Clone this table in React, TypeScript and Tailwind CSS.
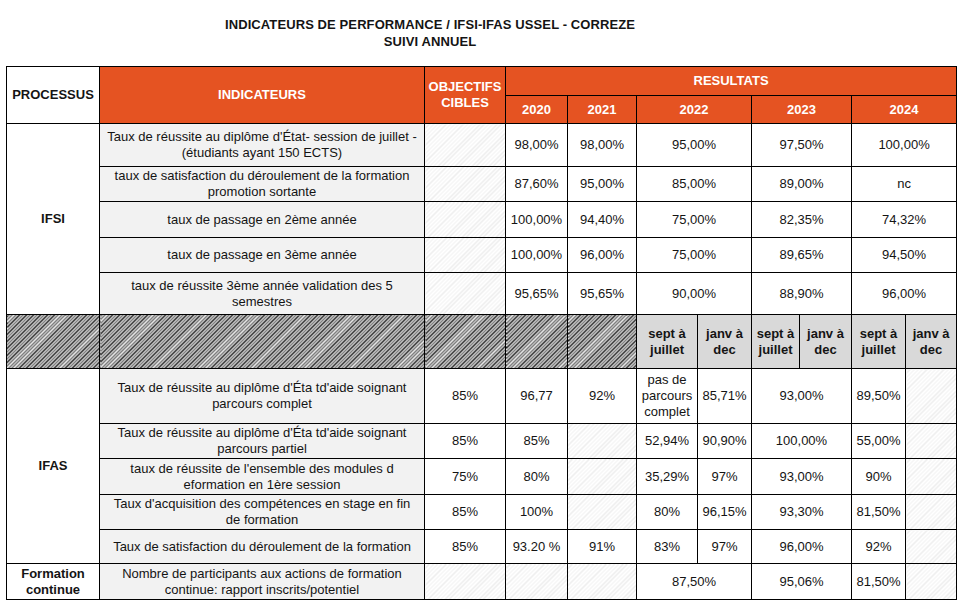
import React from 'react';

type Val = { t?: string; cs?: number; hatch?: boolean };

const cellBase =
  'border border-black text-center align-middle px-[3px] text-[13px] leading-[16px] text-[#141414] whitespace-pre-line';
const head = 'bg-[#e55322] text-white font-bold';
const indic = 'bg-[#f2f2f2]';
const lightHatch =
  'bg-[image:repeating-linear-gradient(135deg,#ffffff_0px,#ffffff_2px,#ececec_2px,#ececec_3px)]';
const darkHatch =
  'bg-[image:repeating-linear-gradient(135deg,#1c1c1c_0px,#1c1c1c_1px,#e4e4e4_1px,#e4e4e4_2.5px)]';

const ifsi: { label: string; h: string; vals: string[] }[] = [
  {
    label: "Taux de réussite au diplôme d'État- session de juillet -\n(étudiants ayant 150 ECTS)",
    h: 'h-[43px]',
    vals: ['98,00%', '98,00%', '95,00%', '97,50%', '100,00%'],
  },
  {
    label: 'taux de satisfaction du déroulement de la formation\npromotion sortante',
    h: 'h-[35px]',
    vals: ['87,60%', '95,00%', '85,00%', '89,00%', 'nc'],
  },
  {
    label: 'taux de passage en 2ème année',
    h: 'h-[36px]',
    vals: ['100,00%', '94,40%', '75,00%', '82,35%', '74,32%'],
  },
  {
    label: 'taux de passage en 3ème année',
    h: 'h-[35px]',
    vals: ['100,00%', '96,00%', '75,00%', '89,65%', '94,50%'],
  },
  {
    label: 'taux de réussite 3ème année validation des 5\nsemestres',
    h: 'h-[42px]',
    vals: ['95,65%', '95,65%', '90,00%', '88,90%', '96,00%'],
  },
];

const ifas: { label: string; h: string; vals: Val[] }[] = [
  {
    label: "Taux de réussite au diplôme d'Éta td'aide soignant\nparcours complet",
    h: 'h-[55px]',
    vals: [
      { t: '85%' },
      { t: '96,77' },
      { t: '92%' },
      { t: 'pas de\nparcours\ncomplet' },
      { t: '85,71%' },
      { t: '93,00%', cs: 2 },
      { t: '89,50%' },
      { hatch: true },
    ],
  },
  {
    label: "Taux de réussite au diplôme d'Éta td'aide soignant\nparcours partiel",
    h: 'h-[35px]',
    vals: [
      { t: '85%' },
      { t: '85%' },
      { hatch: true },
      { t: '52,94%' },
      { t: '90,90%' },
      { t: '100,00%', cs: 2 },
      { t: '55,00%' },
      { hatch: true },
    ],
  },
  {
    label: "taux de réussite de l'ensemble des modules d\neformation en 1ère session",
    h: 'h-[36px]',
    vals: [
      { t: '75%' },
      { t: '80%' },
      { hatch: true },
      { t: '35,29%' },
      { t: '97%' },
      { t: '93,00%', cs: 2 },
      { t: '90%' },
      { hatch: true },
    ],
  },
  {
    label: "Taux d'acquisition des compétences en stage en fin\nde formation",
    h: 'h-[35px]',
    vals: [
      { t: '85%' },
      { t: '100%' },
      { hatch: true },
      { t: '80%' },
      { t: '96,15%' },
      { t: '93,30%', cs: 2 },
      { t: '81,50%' },
      { hatch: true },
    ],
  },
  {
    label: 'Taux de satisfaction du déroulement de la formation',
    h: 'h-[34px]',
    vals: [
      { t: '85%' },
      { t: '93.20 %' },
      { t: '91%' },
      { t: '83%' },
      { t: '97%' },
      { t: '96,00%', cs: 2 },
      { t: '92%' },
      { hatch: true },
    ],
  },
];

const Td = ({ v }: { v: Val }) => (
  <td colSpan={v.cs} className={`${cellBase} ${v.hatch ? lightHatch : 'bg-white'}`}>
    {v.t}
  </td>
);

export default function App() {
  return (
    <div className="w-[964px] h-[605px] bg-white font-['Liberation_Sans',Arial,sans-serif] text-[#141414]">
      <div className="w-[860px] pt-[16px] text-center font-bold text-[13px] leading-[17px] tracking-[0.1px]">
        <div>INDICATEURS DE PERFORMANCE / IFSI-IFAS USSEL - CORREZE</div>
        <div>SUIVI ANNUEL</div>
      </div>

      <table className="ml-[6px] mt-[16px] w-[951px] table-fixed border-collapse border border-black">
        <colgroup>
          <col className="w-[93px]" />
          <col className="w-[325px]" />
          <col className="w-[81px]" />
          <col className="w-[62px]" />
          <col className="w-[69px]" />
          <col className="w-[61px]" />
          <col className="w-[54px]" />
          <col className="w-[48px]" />
          <col className="w-[52px]" />
          <col className="w-[54px]" />
          <col className="w-[51px]" />
        </colgroup>
        <tbody>
          <tr className="h-[29px]">
            <td rowSpan={2} className={`${cellBase} bg-white font-bold`}>
              PROCESSUS
            </td>
            <td rowSpan={2} className={`${cellBase} ${head}`}>
              INDICATEURS
            </td>
            <td rowSpan={2} className={`${cellBase} ${head}`}>
              {'OBJECTIFS\nCIBLES'}
            </td>
            <td colSpan={8} className={`${cellBase} ${head}`}>
              RESULTATS
            </td>
          </tr>
          <tr className="h-[28px]">
            <td className={`${cellBase} ${head}`}>2020</td>
            <td className={`${cellBase} ${head}`}>2021</td>
            <td colSpan={2} className={`${cellBase} ${head}`}>2022</td>
            <td colSpan={2} className={`${cellBase} ${head}`}>2023</td>
            <td colSpan={2} className={`${cellBase} ${head}`}>2024</td>
          </tr>

          {ifsi.map((r, i) => (
            <tr key={r.label} className={r.h}>
              {i === 0 && (
                <td rowSpan={5} className={`${cellBase} bg-white font-bold`}>
                  IFSI
                </td>
              )}
              <td className={`${cellBase} ${indic}`}>{r.label}</td>
              <td className={`${cellBase} ${lightHatch}`} />
              <td className={`${cellBase} bg-white`}>{r.vals[0]}</td>
              <td className={`${cellBase} bg-white`}>{r.vals[1]}</td>
              <td colSpan={2} className={`${cellBase} bg-white`}>{r.vals[2]}</td>
              <td colSpan={2} className={`${cellBase} bg-white`}>{r.vals[3]}</td>
              <td colSpan={2} className={`${cellBase} bg-white`}>{r.vals[4]}</td>
            </tr>
          ))}

          <tr className="h-[54px]">
            <td className={`${cellBase} ${darkHatch}`} />
            <td className={`${cellBase} ${darkHatch}`} />
            <td className={`${cellBase} ${darkHatch}`} />
            <td className={`${cellBase} ${darkHatch}`} />
            <td className={`${cellBase} ${darkHatch}`} />
            {['sept à\njuillet', 'janv à\ndec', 'sept à\njuillet', 'janv à\ndec', 'sept à\njuillet', 'janv à\ndec'].map(
              (s, i) => (
                <td key={i} className={`${cellBase} bg-[#d9d9d9] font-bold px-0`}>
                  {s}
                </td>
              )
            )}
          </tr>

          {ifas.map((r, i) => (
            <tr key={r.label + i} className={r.h}>
              {i === 0 && (
                <td rowSpan={5} className={`${cellBase} bg-white font-bold`}>
                  IFAS
                </td>
              )}
              <td className={`${cellBase} ${indic}`}>{r.label}</td>
              {r.vals.map((v, j) => (
                <Td key={j} v={v} />
              ))}
            </tr>
          ))}

          <tr className="h-[36px]">
            <td className={`${cellBase} bg-white font-bold`}>{'Formation\ncontinue'}</td>
            <td className={`${cellBase} ${indic}`}>
              {'Nombre de participants aux actions de formation\ncontinue: rapport inscrits/potentiel'}
            </td>
            <td className={`${cellBase} ${lightHatch}`} />
            <td className={`${cellBase} ${lightHatch}`} />
            <td className={`${cellBase} ${lightHatch}`} />
            <td colSpan={2} className={`${cellBase} bg-white`}>87,50%</td>
            <td colSpan={2} className={`${cellBase} bg-white`}>95,06%</td>
            <td className={`${cellBase} bg-white`}>81,50%</td>
            <td className={`${cellBase} ${lightHatch}`} />
          </tr>
        </tbody>
      </table>
    </div>
  );
}
